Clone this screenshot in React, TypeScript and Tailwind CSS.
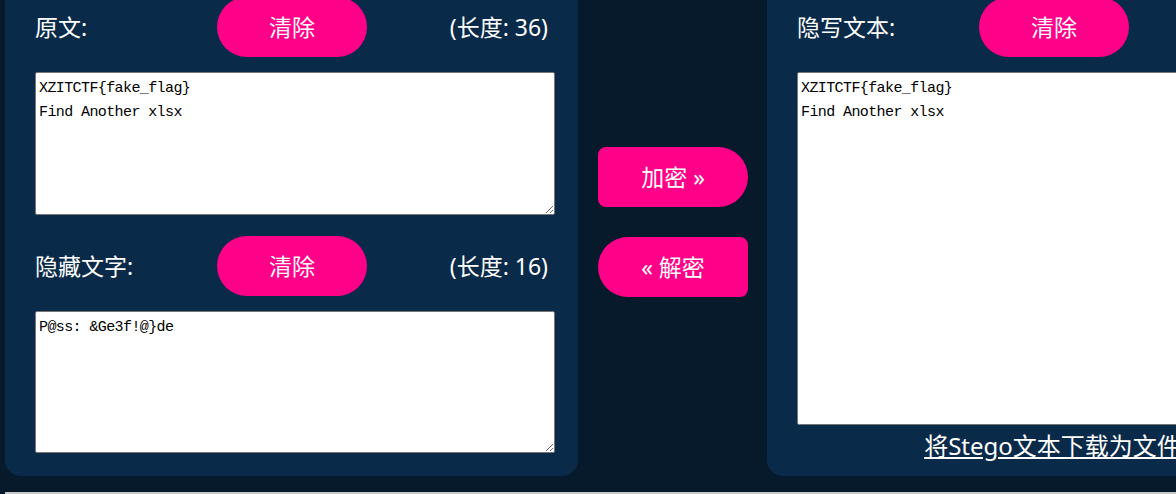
import React from "react";

const font = { fontFamily: '"Noto Sans", "Noto Sans CJK SC", sans-serif' };

const PanelHead = ({ label, count }: { label: string; count?: string }) => (
	<div className="flex items-center h-[60px] text-white text-[23px]">
		<span className="w-[182px]">{label}</span>
		<button className="w-[150px] h-[60px] rounded-full bg-[#ff0088] text-white text-[23px]">
			清除
		</button>
		{count && <span className="flex-1 text-right">{count}</span>}
	</div>
);

const Box = ({ value, h }: { value: string; h: string }) => (
	<textarea
		defaultValue={value}
		style={{ fontFamily: '"Liberation Mono", monospace' }}
		className={`block w-[520px] ${h} bg-white text-black border border-[#767676] rounded-[2px] px-[3px] pt-[4px] pb-[2px] text-[15px] tracking-[-0.6px] leading-[24px] outline-none`}
	/>
);

export default function App() {
	return (
		<div style={font} className="w-[1176px] h-[494px] overflow-hidden bg-[#071a2c]">
			<div className="flex items-start pl-[5px] -mt-[23px] w-[1400px]">
				{/* left */}
				<div className="w-[573px] shrink-0 rounded-2xl bg-[#0a2a4a] px-[30px] pt-[20px] pb-[23px]">
					<PanelHead label="原文:" count="(长度: 36)" />
					<div className="mt-[15px]">
						<Box value={"XZITCTF{fake_flag}\nFind Another xlsx"} h="h-[143px]" />
					</div>
					<div className="mt-[21px]">
						<PanelHead label="隐藏文字:" count="(长度: 16)" />
					</div>
					<div className="mt-[15px]">
						<Box value={"P@ss: &Ge3f!@}de"} h="h-[142px]" />
					</div>
				</div>

				{/* middle */}
				<div className="w-[150px] shrink-0 ml-[20px] pt-[170px] flex flex-col gap-[30px]">
					<button className="h-[60px] rounded-l-[8px] rounded-r-[30px] bg-[#ff0088] text-white text-[23px]">
						加密 »
					</button>
					<button className="h-[60px] rounded-r-[8px] rounded-l-[30px] bg-[#ff0088] text-white text-[23px]">
						« 解密
					</button>
				</div>

				{/* right */}
				<div className="w-[573px] shrink-0 ml-[19px] rounded-2xl bg-[#0a2a4a] px-[30px] pt-[20px] pb-[15px]">
					<PanelHead label="隐写文本:" />
					<div className="mt-[15px]">
						<Box value={"XZITCTF{fake_flag}\nFind Another xlsx"} h="h-[353px]" />
					</div>
					<div className="mt-[6px] h-[30px] leading-[30px] text-center pr-[2px]">
						<a href="#" className="text-white text-[24px] underline">
							将Stego文本下载为文件
						</a>
					</div>
				</div>
			</div>
			<div className="mt-[16px] ml-[5px] h-[20px] bg-white border-t-2 border-[#c8c8c8]" />
		</div>
	);
}
